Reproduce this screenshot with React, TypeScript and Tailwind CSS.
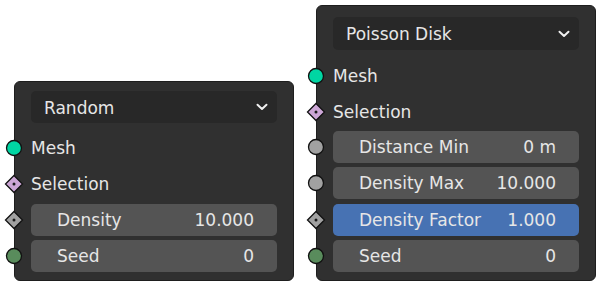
import type { ReactNode } from 'react'

type SocketKind = 'mesh' | 'selection' | 'float' | 'floatDiamond' | 'int'

function Socket({ kind }: { kind: SocketKind }) {
  const diamond = kind === 'selection' || kind === 'floatDiamond'
  if (diamond) {
    const fill = kind === 'selection' ? '#cca6d6' : '#a1a1a1'
    return (
      <svg width="20" height="20" viewBox="0 0 20 20" className="absolute -left-[11px] top-1/2 -translate-y-1/2">
        <path d="M10 1.5 L18.5 10 L10 18.5 L1.5 10 Z" fill={fill} stroke="#111" strokeWidth="1.3" />
        <circle cx="10" cy="10" r="1.5" fill="#1a1a1a" />
      </svg>
    )
  }
  const fill = kind === 'mesh' ? '#00d6a3' : kind === 'int' ? '#598c5c' : '#a1a1a1'
  return (
    <svg width="18" height="18" viewBox="0 0 18 18" className="absolute -left-[10px] top-1/2 -translate-y-1/2">
      <circle cx="9" cy="9" r="7.5" fill={fill} stroke="#111" strokeWidth="1.3" />
    </svg>
  )
}

function Dropdown({ label, h }: { label: string; h: string }) {
  return (
    <div className={`${h} rounded-[5px] bg-[#282828] flex items-center justify-between pl-[13px] pr-[9px]`}>
      <span className="text-[#e6e6e6] pt-[2px]">{label}</span>
      <svg width="12" height="8" viewBox="0 0 12 8">
        <path d="M1.5 1.8 L6 6 L10.5 1.8" fill="none" stroke="#f0f0f0" strokeWidth="2" strokeLinecap="round" strokeLinejoin="round" />
      </svg>
    </div>
  )
}

function LabelRow({ kind, label }: { kind: SocketKind; label: string }) {
  return (
    <div className="relative h-9 flex items-center">
      <Socket kind={kind} />
      <span className="ml-[16px] pt-[1px] text-[#e6e6e6]">{label}</span>
    </div>
  )
}

function FieldRow({ kind, label, value, active }: { kind: SocketKind; label: string; value: string; active?: boolean }) {
  return (
    <div className="relative h-8">
      <Socket kind={kind} />
      <div
        className={`ml-[16px] mr-[16px] h-8 rounded-[5px] flex items-center justify-between pl-[26px] pr-[23px] pt-[1px] text-[#e6e6e6] ${
          active ? 'bg-[#4772b3]' : 'bg-[#545454]'
        }`}
      >
        <span>{label}</span>
        <span>{value}</span>
      </div>
    </div>
  )
}

function Node({ children, className }: { children: ReactNode; className: string }) {
  return (
    <div className={`relative w-[280px] bg-[#303030] rounded-[6px] border border-[#1e1e1e] flex flex-col ${className}`}>
      {children}
    </div>
  )
}

export default function App() {
  return (
    <div
      className="w-[600px] h-[285px] bg-white flex items-end gap-[22px] pl-[14px] text-[17px] leading-none"
      style={{ fontFamily: '"DejaVu Sans", sans-serif' }}
    >
      <Node className="h-[200px] mb-[4px] pt-[9px]">
        <div className="px-[16px]">
          <Dropdown label="Random" h="h-8" />
        </div>
        <div className="mt-[7px]">
          <LabelRow kind="mesh" label="Mesh" />
          <LabelRow kind="selection" label="Selection" />
        </div>
        <div className="mt-[2px] flex flex-col gap-1">
          <FieldRow kind="floatDiamond" label="Density" value="10.000" />
          <FieldRow kind="int" label="Seed" value="0" />
        </div>
      </Node>
      <Node className="h-[276px] mb-[4px] pt-[11px]">
        <div className="px-[16px]">
          <Dropdown label="Poisson Disk" h="h-[33px]" />
        </div>
        <div className="mt-[8px]">
          <LabelRow kind="mesh" label="Mesh" />
          <LabelRow kind="selection" label="Selection" />
        </div>
        <div className="mt-[1px] flex flex-col gap-[4.4px]">
          <FieldRow kind="float" label="Distance Min" value="0 m" />
          <FieldRow kind="float" label="Density Max" value="10.000" />
          <FieldRow kind="floatDiamond" label="Density Factor" value="1.000" active />
          <FieldRow kind="int" label="Seed" value="0" />
        </div>
      </Node>
    </div>
  )
}
